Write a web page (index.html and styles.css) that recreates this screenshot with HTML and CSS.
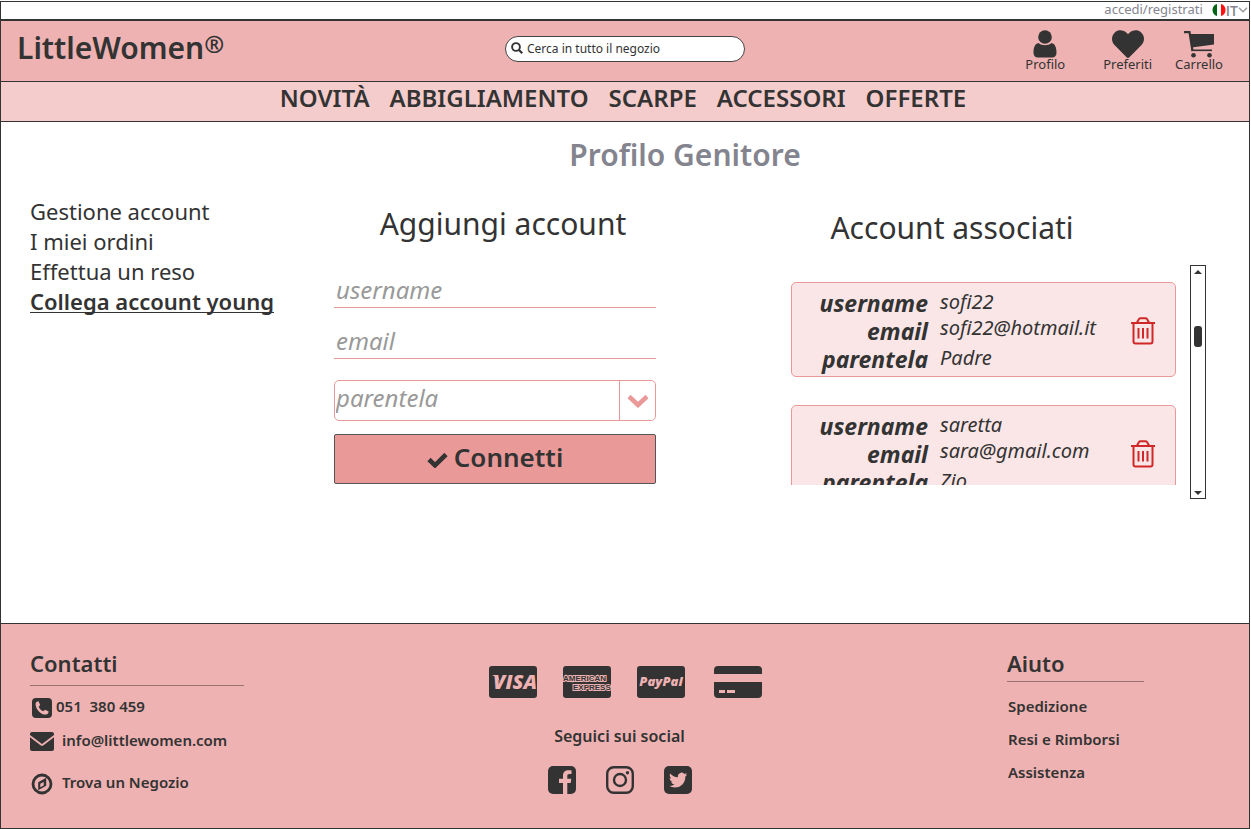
FILE: index.html
```html
<!DOCTYPE html>
<html lang="it">
<head>
<meta charset="utf-8">
<title>LittleWomen - Profilo Genitore</title>
<link rel="stylesheet" href="styles.css">
</head>
<body>
<div class="page">
  <div class="topbar">
    <a class="login" href="#">accedi/registrati</a>
    <button class="lang" type="button" aria-label="Lingua: IT">
      <svg width="14" height="12" viewBox="0 0 14 12"><path d="M5 0v12C-1 11-1 1 5 0z" fill="#006414"/><path d="M5 0h4v12H5z" fill="#fff"/><path d="M9 0v12c6-1 6-11 0-12z" fill="#f11"/></svg>
      <span>IT</span>
      <svg width="10" height="6" viewBox="0 0 10 6"><path d="M1 .8l4 4 4-4" fill="none" stroke="#999" stroke-width="1.4"/></svg>
    </button>
  </div>

  <header class="header">
    <a class="brand" href="#">LittleWomen<span class="reg">®</span></a>
    <form class="search" role="search">
      <svg width="12" height="12" viewBox="0 0 12 12"><circle cx="5" cy="5" r="3.9" fill="none" stroke="#333" stroke-width="1.9"/><path d="M8 8l3.2 3.2" stroke="#333" stroke-width="2.2"/></svg>
      <input type="search" placeholder="Cerca in tutto il negozio" aria-label="Cerca in tutto il negozio">
    </form>
    <nav class="shortcuts" aria-label="Scorciatoie">
      <a href="#"><svg width="24" height="28" viewBox="0 0 24 28"><circle cx="12" cy="7" r="6.8"/><path d="M5.500 13c1.700 1.300 3.900 2.300 6.500 2.300s4.800-1 6.500-2.300c3.600.8 5 4.500 5 9.500 0 3.300-1.700 5-4.500 5H5c-2.800 0-4.500-1.700-4.500-5 0-5 1.400-8.700 5-9.500z"/></svg><span>Profilo</span></a>
      <a href="#"><svg width="32" height="28" viewBox="0 28 512 454" preserveAspectRatio="none"><path d="M462.3 62.600C407.500 15.900 326 24.300 275.700 76.200L256 96.500l-19.700-20.300C186.100 24.300 104.500 15.900 49.700 62.600c-62.800 53.600-66.100 149.800-9.900 207.900l193.500 199.800c12.500 12.900 32.800 12.900 45.300 0l193.500-199.800c56.300-58.100 53-154.300-9.800-207.900z"/></svg><span>Preferiti</span></a>
      <a href="#"><svg width="30" height="27" viewBox="0 0 30 27"><path d="M0 1.200h5.500l3 18.800" fill="none" stroke="#333" stroke-width="2.200"/><path d="M5.500 3H30v10.500L7.500 16.500z"/><path d="M7.500 19.300H28" stroke="#333" stroke-width="1.600"/><circle cx="9.500" cy="24.300" r="2.300"/><circle cx="25.500" cy="24.300" r="2.300"/></svg><span>Carrello</span></a>
    </nav>
  </header>

  <nav class="menu" aria-label="Categorie">
    <a href="#">NOVITÀ</a>
    <a href="#">ABBIGLIAMENTO</a>
    <a href="#">SCARPE</a>
    <a href="#">ACCESSORI</a>
    <a href="#">OFFERTE</a>
  </nav>

  <main class="main">
    <h1 class="title">Profilo Genitore</h1>
    <div class="columns">
      <nav class="sidebar" aria-label="Profilo">
        <a href="#">Gestione account</a>
        <a href="#">I miei ordini</a>
        <a href="#">Effettua un reso</a>
        <a class="current" href="#" aria-current="page">Collega account young</a>
      </nav>

      <form class="connect">
        <h2>Aggiungi account</h2>
        <input class="field" type="text" placeholder="username" aria-label="username">
        <input class="field" type="email" placeholder="email" aria-label="email">
        <div class="picker">
          <select aria-label="parentela">
            <option>parentela</option>
            <option>Padre</option>
            <option>Zio</option>
          </select>
          <span class="arrow"><svg width="22" height="14" viewBox="0 0 22 14"><path d="M2 2.500l9 8.500 9-8.500" fill="none" stroke="#ea9999" stroke-width="4.500"/></svg></span>
        </div>
        <button class="submit" type="button"><svg width="21" height="16" viewBox="0 0 21 16"><path d="M2 7.500l6 5.800L19 2.500" fill="none" stroke="#333" stroke-width="4.600"/></svg>Connetti</button>
      </form>

      <section class="linked">
        <h2>Account associati</h2>
        <div class="viewport">
          <div class="cards">
            <article class="card">
              <dl>
                <dt>username</dt><dd>sofi22</dd>
                <dt>email</dt><dd class="mail">sofi22@hotmail.it</dd>
                <dt>parentela</dt><dd>Padre</dd>
              </dl>
              <button class="delete" type="button" aria-label="Elimina sofi22"><svg width="26" height="28" viewBox="0 0 26 28"><path d="M1 6h24M3.500 6v18.500q0 2 2 2h15q2 0 2-2V6M7 5.500L9 2q.5-.8 1.500-.8h5q1 0 1.500.8l2 3.500M8.500 11v10.500M13 11v10.500M17.500 11v10.500"/></svg></button>
            </article>
            <article class="card">
              <dl>
                <dt>username</dt><dd>saretta</dd>
                <dt>email</dt><dd class="mail">sara@gmail.com</dd>
                <dt>parentela</dt><dd>Zio</dd>
              </dl>
              <button class="delete" type="button" aria-label="Elimina saretta"><svg width="26" height="28" viewBox="0 0 26 28"><path d="M1 6h24M3.500 6v18.500q0 2 2 2h15q2 0 2-2V6M7 5.500L9 2q.5-.8 1.500-.8h5q1 0 1.500.8l2 3.500M8.500 11v10.500M13 11v10.500M17.500 11v10.500"/></svg></button>
            </article>
          </div>
          <div class="scrollbar" aria-hidden="true">
            <svg width="8" height="4" viewBox="0 0 8 4"><path d="M0 4l4-4 4 4z"/></svg>
            <span class="thumb"></span>
            <svg class="down" width="8" height="4" viewBox="0 0 8 4"><path d="M0 0l4 4 4-4z"/></svg>
          </div>
        </div>
      </section>
    </div>
  </main>

  <footer class="footer">
    <section>
      <h3 class="contacts-title">Contatti</h3>
      <ul class="contacts">
        <li class="phone"><svg width="20" height="20" viewBox="0 0 20 20"><rect width="20" height="20" rx="4"/><path d="M3.600 5.200C4.300 3.900 5.600 3.200 6.500 3.300L8.200 6.900 6.700 8.700c.9 2.200 2.300 3.600 4.500 4.600l1.900-1.500 3.500 1.700c0 1.500-1 2.700-2.500 3.100C8.800 17 3 10.800 3.600 5.200z" fill="#eeb2b2"/></svg><a href="tel:051380459">051&nbsp; 380 459</a></li>
        <li><svg width="24" height="19" viewBox="0 0 24 19"><path d="M0 2q0-2 2-2h20q2 0 2 2v1L12 12 0 3zM0 5.300L10.500 13.200q1.500 1 3 0L24 5.300V17q0 2-2 2H2q-2 0-2-2z"/></svg><a href="mailto:info@littlewomen.com">info@littlewomen.com</a></li>
        <li class="store"><svg width="22" height="22" viewBox="0 0 22 22"><circle cx="11" cy="11" r="9" fill="none" stroke="#333" stroke-width="2.800"/><path d="M15.200 4.800v7.900l-8 4.500V9.300zM9.300 10.700v3.600l3.400-1.900V9z" fill-rule="evenodd"/></svg><a href="#">Trova un Negozio</a></li>
      </ul>
    </section>

    <section class="middle">
      <div class="payments">
        <svg width="48" height="32" viewBox="0 0 48 32" role="img" aria-label="Visa"><rect width="48" height="32" rx="3"/><text class="visa" x="26" y="23" text-anchor="middle">VISA</text><path d="M3 9h5.500l2.500 7Q8 11 3 9z" fill="#eeb2b2"/></svg>
        <svg width="48" height="32" viewBox="0 0 48 32" role="img" aria-label="American Express"><rect width="48" height="32" rx="3"/><text class="amex" x="0" y="15">AMERICAN</text><text class="amex" x="10" y="24">EXPRESS</text></svg>
        <svg width="48" height="32" viewBox="0 0 48 32" role="img" aria-label="PayPal"><rect width="48" height="32" rx="3"/><text class="paypal" x="24" y="20" text-anchor="middle">PayPal</text></svg>
        <svg width="48" height="32" viewBox="0 0 48 32" role="img" aria-label="Carta di credito"><path d="M0 8V4q0-4 4-4h40q4 0 4 4v4zM0 16h48v12q0 4-4 4H4q-4 0-4-4z"/><path d="M5 24h6v3H5zM13 24h8v3h-8z" fill="#eeb2b2"/></svg>
      </div>
      <div class="follow">
        <h4>Seguici sui social</h4>
        <div class="social">
          <a href="#" aria-label="Facebook"><svg width="28" height="28" viewBox="0 0 28 28"><rect width="28" height="28" rx="5"/><path d="M15 28V17h-4v-4.300h4V10c0-4 2.200-5.700 5.500-5.700h3V8h-2c-1.800 0-2.200.9-2.200 2.300v2.400h4l-.6 4.300h-3.400v11z" fill="#eeb2b2"/></svg></a>
          <a href="#" aria-label="Instagram"><svg width="28" height="28" viewBox="0 0 28 28"><rect x="1.200" y="1.200" width="25.600" height="25.600" rx="6.500" fill="none" stroke="#333" stroke-width="2.400"/><circle cx="14" cy="14" r="6" fill="none" stroke="#333" stroke-width="2.400"/><circle cx="21.500" cy="6.800" r="1.700"/></svg></a>
          <a href="#" aria-label="Twitter"><svg width="28" height="28" viewBox="0 0 28 28"><rect width="28" height="28" rx="5"/><path d="M23.953 4.570a10 10 0 01-2.825.775 4.958 4.958 0 002.163-2.723c-.951.555-2.005.959-3.127 1.184a4.920 4.920 0 00-8.384 4.482C7.690 8.095 4.067 6.130 1.640 3.162a4.822 4.822 0 00-.666 2.475c0 1.710.87 3.213 2.188 4.096a4.904 4.904 0 01-2.228-.616v.06a4.923 4.923 0 003.946 4.827 4.996 4.996 0 01-2.212.085 4.936 4.936 0 004.604 3.417 9.867 9.867 0 01-6.102 2.105c-.39 0-.779-.023-1.170-.067a13.995 13.995 0 007.557 2.209c9.053 0 13.998-7.496 13.998-13.985 0-.21 0-.42-.015-.63A9.935 9.935 0 0024 4.590z" fill="#eeb2b2" transform="translate(5 5) scale(.76)"/></svg></a>
        </div>
      </div>
    </section>

    <section class="help">
      <h3>Aiuto</h3>
      <ul>
        <li><a href="#">Spedizione</a></li>
        <li><a href="#">Resi e Rimborsi</a></li>
        <li><a href="#">Assistenza</a></li>
      </ul>
    </section>
  </footer>
</div>
</body>
</html>
```
FILE: styles.css
```css
* { box-sizing: border-box; }
body {
  margin: 0;
  font-family: "Noto Sans", "Open Sans", sans-serif;
  color: #333;
}
a { color: inherit; text-decoration: none; }
h1, h2, h3, h4, ul, dl, dd { margin: 0; padding: 0; font-weight: inherit; }
ul { list-style: none; }
button, input, select { font: inherit; color: inherit; }
button { cursor: pointer; padding: 0; border: 0; background: none; }
svg { display: block; flex: none; fill: #333; }

.page {
  display: flex;
  flex-direction: column;
  min-height: calc(100vh - 1px);
  margin: 1px 1px 0 0;
  border: 1px solid #333;
}

.topbar {
  display: flex;
  justify-content: flex-end;
  align-items: center;
  gap: 9px;
  height: 17px;
  padding: 0 1px 1px 0;
  font-size: 13px;
  line-height: 15px;
  color: #84848f;
}
.login { padding-bottom: 1px; }
.lang {
  display: flex;
  align-items: center;
  font-family: "Open Sans", "Noto Sans", sans-serif;
  font-size: 14px;
  font-weight: 600;
}

.header {
  display: grid;
  grid-template-columns: 1fr 240px 1fr;
  align-items: start;
  height: 63px;
  padding: 7px 26px 0 26px;
  border-top: 2px solid #333;
  border-bottom: 1px solid #333;
  background: #eeb2b2;
}
.brand {
  margin-left: -10px;
  font-size: 30px;
  line-height: 40px;
  font-weight: 600;
}
.reg { font-size: 24px; line-height: 24px; vertical-align: 6px; font-weight: 700; }
.search {
  display: flex;
  align-items: center;
  gap: 4px;
  height: 26px;
  margin-top: 8px;
  padding: 0 5px 2px;
  border: 1px solid #444;
  border-radius: 13px;
  background: #fff;
}
.search input {
  flex: 1;
  min-width: 0;
  padding: 0;
  border: 0;
  outline: 0;
  background: none;
  font-size: 12px;
}
.search input::placeholder { color: #333; opacity: 1; }
.shortcuts { display: flex; justify-content: flex-end; gap: 23px; }
.shortcuts a {
  display: flex;
  flex-direction: column;
  align-items: center;
  justify-content: flex-end;
  height: 43px;
  font-size: 13px;
  line-height: 13px;
}
.shortcuts a:first-child { margin-right: 15px; }

.menu {
  display: flex;
  justify-content: center;
  gap: 20px;
  height: 40px;
  padding-right: 4px;
  border-bottom: 1px solid #333;
  background: #f4cccc;
  font-size: 24px;
  line-height: 32px;
  font-weight: 600;
}

.main { flex: 1; padding: 13px 43px 0 29px; }
.title {
  padding-left: 134px;
  margin-bottom: 21px;
  text-align: center;
  font-size: 30px;
  line-height: 40px;
  font-weight: 600;
  color: #84848f;
}
.columns {
  display: grid;
  grid-template-columns: 304fr 322fr 135fr 415fr;
}
.columns h2 { font-size: 30px; line-height: 40px; text-align: center; }
.sidebar {
  display: flex;
  flex-direction: column;
  font-size: 22px;
  line-height: 30px;
}
.sidebar .current {
  font-weight: 600;
  text-decoration: underline;
  text-decoration-thickness: 1px;
  text-underline-offset: 2px;
  text-decoration-skip-ink: none;
}

.connect { display: flex; flex-direction: column; padding-top: 8px; }
.connect h2 { margin-bottom: 28px; padding-left: 16px; }
.field {
  width: 100%;
  height: 36px;
  margin-bottom: 15px;
  padding: 0 2px 1px;
  border: 0;
  border-bottom: 1px solid #ea9999;
  outline: 0;
  background: none;
  font-size: 24px;
  font-style: italic;
}
.field::placeholder { color: #999; opacity: 1; }
.picker {
  display: flex;
  height: 41px;
  margin: 6px 0 13px;
  border: 1px solid #ea9999;
  border-radius: 5px;
  position: relative;
}
.picker select {
  appearance: none;
  flex: 1;
  padding: 0 36px 6px 1px;
  border: 0;
  outline: 0;
  background: none;
  font-size: 24px;
  font-style: italic;
  color: #999;
}
.arrow {
  position: absolute;
  top: 0;
  right: 0;
  bottom: 0;
  display: grid;
  place-items: center;
  width: 36px;
  border-left: 1px solid #ea9999;
  pointer-events: none;
}
.submit {
  display: flex;
  justify-content: center;
  align-items: center;
  gap: 6px;
  height: 50px;
  padding-bottom: 5px;
  border: 1px solid #555;
  border-radius: 2px;
  background: #ea9999;
  font-size: 26px;
  line-height: 40px;
  font-weight: 600;
}
.submit svg { margin-top: 6px; }

.linked { grid-column: 4; padding-top: 12px; }
.linked h2 { margin-bottom: 17px; padding-right: 93px; }
.viewport { display: flex; gap: 14px; align-items: flex-start; }
.cards {
  flex: 1;
  display: flex;
  flex-direction: column;
  gap: 28px;
  height: 220px;
  padding-top: 17px;
  overflow: hidden;
}
.card {
  flex: none;
  display: flex;
  justify-content: space-between;
  align-items: center;
  padding: 6px 19px 3px 26px;
  border: 1px solid #ea9999;
  border-radius: 5px;
  background: #fae6e6;
}
.card dl {
  display: grid;
  grid-template-columns: 110px auto;
  grid-auto-rows: 28px;
  column-gap: 12px;
  font-style: italic;
}
.card dt { font-size: 23px; line-height: 28px; font-weight: 700; text-align: right; }
.card dd { align-self: start; font-size: 20px; line-height: 26px; }
.card .mail { line-height: 22px; }
.delete svg { fill: none; stroke: #d02828; stroke-width: 2; }
.scrollbar {
  display: flex;
  flex-direction: column;
  align-items: center;
  width: 16px;
  height: 234px;
  padding: 4px 0 3px;
  border: 1px solid #333;
}
.thumb { width: 8px; height: 21px; margin-top: 52px; border-radius: 3px; background: #333; }
.down { margin-top: auto; }

.footer {
  display: grid;
  grid-template-columns: 459fr 518fr 242fr;
  height: 205px;
  padding: 24px 0 0 29px;
  border-top: 1px solid #333;
  background: #eeb2b2;
  font-size: 15px;
  line-height: 28px;
  font-weight: 600;
}
.footer h3 { font-size: 22px; line-height: 30px; border-bottom: 1px solid #967272; }
.footer .contacts-title { width: 214px; padding-bottom: 7px; }
.contacts { display: flex; flex-direction: column; gap: 6px; padding-top: 6px; }
.contacts li { display: flex; align-items: center; gap: 8px; }
.contacts svg { margin-top: 3px; }
.contacts .phone { gap: 4px; padding-left: 2px; }
.contacts .store { margin-top: 8px; padding-left: 1px; gap: 9px; }
.middle { width: 273px; padding-top: 18px; }
.payments { display: flex; gap: 26px; }
.payments svg:last-child { margin-left: 3px; }
.follow { padding: 24px 12px 0 0; text-align: center; }
.follow h4 { font-size: 16px; }
.social { display: flex; justify-content: center; gap: 30px; padding-top: 16px; }
.visa { font: italic 800 20px "Open Sans", sans-serif; fill: #eeb2b2; }
.paypal { font: italic 800 13px "Open Sans", sans-serif; fill: #eeb2b2; }
.amex {
  font: 700 8px "Liberation Sans", sans-serif;
  fill: #333;
  stroke: #eeb2b2;
  stroke-width: 2px;
  paint-order: stroke;
}
.help h3 { width: 137px; padding-bottom: 3px; }
.help ul { display: flex; flex-direction: column; gap: 5px; padding: 10px 0 0 1px; }
```
